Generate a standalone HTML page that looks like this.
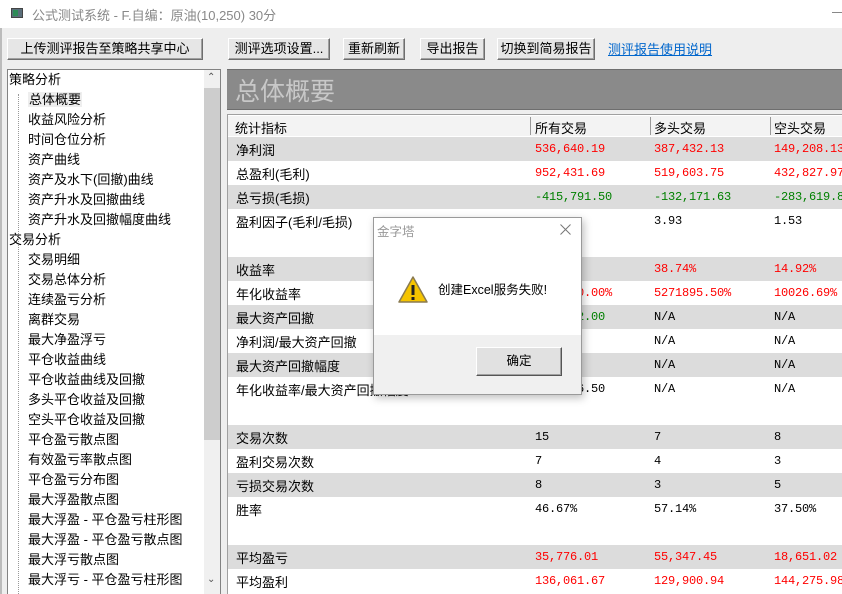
<!DOCTYPE html>
<html><head><meta charset="utf-8"><style>
*{margin:0;padding:0;box-sizing:border-box}
body{width:842px;height:594px;overflow:hidden;background:#eeeeee;font-family:"Liberation Sans","Noto Sans CJK SC",sans-serif;font-size:13px;color:#000;position:relative}
.a{position:absolute;white-space:nowrap}
.btn{position:absolute;top:38px;height:22px;background:#e6e6e6;border:1px solid;border-color:#fff #6e6e6e #6e6e6e #fff;box-shadow:inset -1px -1px 0 #a0a0a0;text-align:center;line-height:20px;font-size:13px}
.tree div{height:20px;line-height:20px}
.row{position:absolute;left:228px;width:614px}
.g{background:#dcdcdc}
.num{font-family:"Liberation Mono",monospace;font-size:12px;letter-spacing:-0.2px}
.r{color:#f00}.gr{color:#008000}
</style></head><body>
<div class="a" style="left:0;top:0;width:842px;height:28px;background:#fff"></div>
<div class="a" style="left:11px;top:8px;width:12px;height:10px;background:#5a6e7a;border:1px solid #444"></div>
<div class="a" style="left:13px;top:10px;width:5px;height:6px;background:#2e8b57"></div>
<div class="a" style="left:32px;top:5px;color:#888;font-size:13px">公式测试系统 - F.自编：原油(10,250) 30分</div>
<div class="a" style="left:832px;top:12px;width:10px;height:1px;background:#888"></div>
<div class="a" style="left:0;top:28px;width:2px;height:566px;background:#bbb"></div>

<div class="btn" style="left:7px;width:196px">上传测评报告至策略共享中心</div>
<div class="btn" style="left:228px;width:102px">测评选项设置...</div>
<div class="btn" style="left:343px;width:62px">重新刷新</div>
<div class="btn" style="left:420px;width:65px">导出报告</div>
<div class="btn" style="left:497px;width:98px">切换到简易报告</div>
<div class="a" style="left:608px;top:39px;color:#0066cc;text-decoration:underline">测评报告使用说明</div>

<div class="a" style="left:7px;top:69px;width:214px;height:525px;background:#fff;border:1px solid #828282;border-bottom:none"></div>
<div class="a" style="left:204px;top:70px;width:16px;height:524px;background:#f0f0f0"></div>
<div class="a" style="left:204px;top:88px;width:16px;height:352px;background:#cdcdcd"></div>
<div class="a" style="left:207px;top:72px;font-size:10px;color:#555">⌃</div>
<div class="a" style="left:207px;top:574px;font-size:10px;color:#555">⌄</div>
<div class="a" style="left:18px;top:94px;width:0;height:500px;border-left:1px dotted #999"></div>
<div class="a tree" style="left:9px;top:70px">
<div>策略分析</div>
<div style="padding-left:19px"><span style="background:#eee;padding:0 1px">总体概要</span></div>
<div style="padding-left:19px">收益风险分析</div>
<div style="padding-left:19px">时间仓位分析</div>
<div style="padding-left:19px">资产曲线</div>
<div style="padding-left:19px">资产及水下(回撤)曲线</div>
<div style="padding-left:19px">资产升水及回撤曲线</div>
<div style="padding-left:19px">资产升水及回撤幅度曲线</div>
<div>交易分析</div>
<div style="padding-left:19px">交易明细</div>
<div style="padding-left:19px">交易总体分析</div>
<div style="padding-left:19px">连续盈亏分析</div>
<div style="padding-left:19px">离群交易</div>
<div style="padding-left:19px">最大净盈浮亏</div>
<div style="padding-left:19px">平仓收益曲线</div>
<div style="padding-left:19px">平仓收益曲线及回撤</div>
<div style="padding-left:19px">多头平仓收益及回撤</div>
<div style="padding-left:19px">空头平仓收益及回撤</div>
<div style="padding-left:19px">平仓盈亏散点图</div>
<div style="padding-left:19px">有效盈亏率散点图</div>
<div style="padding-left:19px">平仓盈亏分布图</div>
<div style="padding-left:19px">最大浮盈散点图</div>
<div style="padding-left:19px">最大浮盈 - 平仓盈亏柱形图</div>
<div style="padding-left:19px">最大浮盈 - 平仓盈亏散点图</div>
<div style="padding-left:19px">最大浮亏散点图</div>
<div style="padding-left:19px">最大浮亏 - 平仓盈亏柱形图</div>
</div>

<div class="a" style="left:227px;top:69px;width:615px;height:41px;background:#8a8a8a;border-top:1px solid #6e6e6e;border-bottom:1px solid #6e6e6e"></div>
<div class="a" style="left:235px;top:72px;font-size:25px;color:#c8c8c8">总体概要</div>
<div class="a" style="left:227px;top:114px;width:615px;height:480px;background:#fff;border-top:1px solid #a0a0a0;border-left:1px solid #a0a0a0"></div>
<div class="a" style="left:228px;top:116px;width:614px;height:20px;background:#f3f3f3"></div>
<div class="a" style="left:235px;top:118px">统计指标</div>
<div class="a" style="left:530px;top:117px;width:1px;height:18px;background:#999"></div>
<div class="a" style="left:535px;top:118px">所有交易</div>
<div class="a" style="left:650px;top:117px;width:1px;height:18px;background:#999"></div>
<div class="a" style="left:654px;top:118px">多头交易</div>
<div class="a" style="left:770px;top:117px;width:1px;height:18px;background:#999"></div>
<div class="a" style="left:774px;top:118px">空头交易</div>

<div class="row g" style="top:137px;height:24px"></div>
<div class="row g" style="top:185px;height:24px"></div>
<div class="row g" style="top:257px;height:24px"></div>
<div class="row g" style="top:305px;height:24px"></div>
<div class="row g" style="top:353px;height:24px"></div>
<div class="row g" style="top:425px;height:24px"></div>
<div class="row g" style="top:473px;height:24px"></div>
<div class="row g" style="top:545px;height:24px"></div>

<div class="a" style="left:236px;top:140px">净利润</div>
<div class="a num r" style="left:535px;top:142px">536,640.19</div><div class="a num r" style="left:654px;top:142px">387,432.13</div><div class="a num r" style="left:774px;top:142px">149,208.13</div>
<div class="a" style="left:236px;top:164px">总盈利(毛利)</div>
<div class="a num r" style="left:535px;top:166px">952,431.69</div><div class="a num r" style="left:654px;top:166px">519,603.75</div><div class="a num r" style="left:774px;top:166px">432,827.97</div>
<div class="a" style="left:236px;top:188px">总亏损(毛损)</div>
<div class="a num gr" style="left:535px;top:190px">-415,791.50</div><div class="a num gr" style="left:654px;top:190px">-132,171.63</div><div class="a num gr" style="left:774px;top:190px">-283,619.88</div>
<div class="a" style="left:236px;top:212px">盈利因子(毛利/毛损)</div>
<div class="a num" style="left:654px;top:214px">3.93</div><div class="a num" style="left:774px;top:214px">1.53</div>
<div class="a" style="left:236px;top:260px">收益率</div>
<div class="a num r" style="left:535px;top:262px">53.66%</div><div class="a num r" style="left:654px;top:262px">38.74%</div><div class="a num r" style="left:774px;top:262px">14.92%</div>
<div class="a" style="left:236px;top:284px">年化收益率</div>
<div class="a num r" style="left:535px;top:286px">5298920.00%</div><div class="a num r" style="left:654px;top:286px">5271895.50%</div><div class="a num r" style="left:774px;top:286px">10026.69%</div>
<div class="a" style="left:236px;top:308px">最大资产回撤</div>
<div class="a num gr" style="left:535px;top:310px">-82,012.00</div><div class="a num" style="left:654px;top:310px">N/A</div><div class="a num" style="left:774px;top:310px">N/A</div>
<div class="a" style="left:236px;top:332px">净利润/最大资产回撤</div>
<div class="a num" style="left:535px;top:334px">6.54</div><div class="a num" style="left:654px;top:334px">N/A</div><div class="a num" style="left:774px;top:334px">N/A</div>
<div class="a" style="left:236px;top:356px">最大资产回撤幅度</div>
<div class="a num" style="left:535px;top:358px">6.13%</div><div class="a num" style="left:654px;top:358px">N/A</div><div class="a num" style="left:774px;top:358px">N/A</div>
<div class="a" style="left:236px;top:380px">年化收益率/最大资产回撤幅度</div>
<div class="a num" style="left:535px;top:382px">8644646.50</div><div class="a num" style="left:654px;top:382px">N/A</div><div class="a num" style="left:774px;top:382px">N/A</div>
<div class="a" style="left:236px;top:428px">交易次数</div>
<div class="a num" style="left:535px;top:430px">15</div><div class="a num" style="left:654px;top:430px">7</div><div class="a num" style="left:774px;top:430px">8</div>
<div class="a" style="left:236px;top:452px">盈利交易次数</div>
<div class="a num" style="left:535px;top:454px">7</div><div class="a num" style="left:654px;top:454px">4</div><div class="a num" style="left:774px;top:454px">3</div>
<div class="a" style="left:236px;top:476px">亏损交易次数</div>
<div class="a num" style="left:535px;top:478px">8</div><div class="a num" style="left:654px;top:478px">3</div><div class="a num" style="left:774px;top:478px">5</div>
<div class="a" style="left:236px;top:500px">胜率</div>
<div class="a num" style="left:535px;top:502px">46.67%</div><div class="a num" style="left:654px;top:502px">57.14%</div><div class="a num" style="left:774px;top:502px">37.50%</div>
<div class="a" style="left:236px;top:548px">平均盈亏</div>
<div class="a num r" style="left:535px;top:550px">35,776.01</div><div class="a num r" style="left:654px;top:550px">55,347.45</div><div class="a num r" style="left:774px;top:550px">18,651.02</div>
<div class="a" style="left:236px;top:572px">平均盈利</div>
<div class="a num r" style="left:535px;top:574px">136,061.67</div><div class="a num r" style="left:654px;top:574px">129,900.94</div><div class="a num r" style="left:774px;top:574px">144,275.98</div>

<!-- dialog -->
<div class="a" style="left:373px;top:217px;width:209px;height:178px;background:#fff;border:1px solid #9a9a9a;box-shadow:2px 3px 8px rgba(0,0,0,.25)"></div>
<div class="a" style="left:377px;top:221px;color:#999;font-size:12.5px">金字塔</div>
<svg class="a" style="left:560px;top:224px" width="11" height="11" viewBox="0 0 11 11"><path d="M0.5 0.5 L10.5 10.5 M10.5 0.5 L0.5 10.5" stroke="#777" stroke-width="1"/></svg>
<div class="a" style="left:374px;top:335px;width:207px;height:59px;background:#f0f0f0"></div>
<svg class="a" style="left:397px;top:275px" width="32" height="30" viewBox="0 0 32 30"><path d="M16 2 L30 27 L2 27 Z" fill="#f5c400" stroke="#8a7a50" stroke-width="1.5" stroke-linejoin="round"/><rect x="14.5" y="10" width="3" height="10" fill="#222"/><rect x="14.5" y="22" width="3" height="3" fill="#222"/></svg>
<div class="a" style="left:438px;top:279px;font-size:12.5px">创建Excel服务失败!</div>
<div class="a" style="left:476px;top:347px;width:86px;height:29px;background:#e1e1e1;border:1px solid;border-color:#fff #555 #555 #fff;box-shadow:inset -1px -1px 0 #a0a0a0;text-align:center;line-height:27px;font-size:12.5px">确定</div>
</body></html>
